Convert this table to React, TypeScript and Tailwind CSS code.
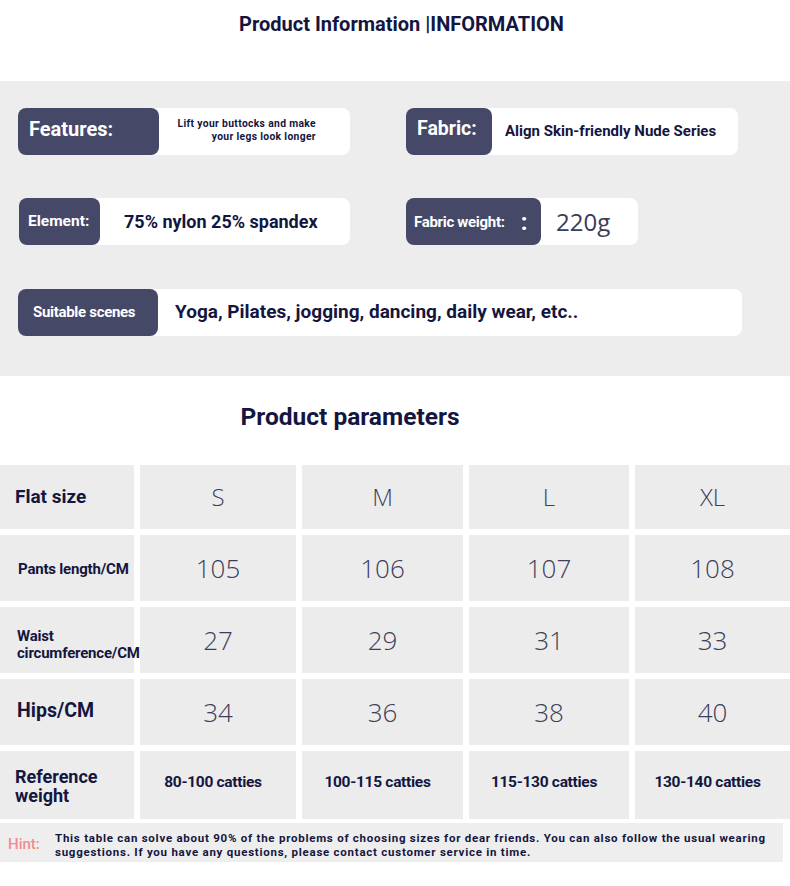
import React from 'react';

const navy = 'text-[#14163f]';

function Card({
  label,
  labelW,
  width,
  labelClass,
  children,
}: {
  label: React.ReactNode;
  labelW: string;
  width: string;
  labelClass: string;
  children: React.ReactNode;
}) {
  return (
    <div className={`flex h-[47px] rounded-[8px] bg-white ${width}`}>
      <div
        className={`flex h-full shrink-0 items-center rounded-[8px] bg-[#464868] text-white font-bold ${labelW} ${labelClass}`}
      >
        {label}
      </div>
      <div className="flex flex-1 items-center">{children}</div>
    </div>
  );
}

const sizes = ['S', 'M', 'L', 'XL'];
const rows = [
  {
    label: <>Pants length/CM</>,
    cls: 'text-[15px] pl-[18px] pt-[2px] whitespace-nowrap tracking-[-0.2px]',
    values: ['105', '106', '107', '108'],
  },
  {
    label: (
      <>
        Waist
        <br />
        circumference/CM
      </>
    ),
    cls: 'text-[15px] pl-[17px] pt-[9px] leading-[17px] whitespace-nowrap tracking-[-0.2px]',
    values: ['27', '29', '31', '33'],
  },
  { label: <>Hips/CM</>, cls: 'text-[19.5px] pl-[17px] pb-[2px]', values: ['34', '36', '38', '40'] },
];
const weights = ['80-100 catties', '100-115 catties', '115-130 catties', '130-140 catties'];

export default function App() {
  return (
    <div className="w-[790px] h-[886px] bg-white font-['Roboto',sans-serif]">
      {/* title */}
      <div className="flex h-[81px] items-start justify-center pt-[9px] pl-[13px]">
        <h1 className={`text-[20px] font-bold ${navy}`}>Product Information |INFORMATION</h1>
      </div>

      {/* info cards */}
      <div className="bg-[#ededed] pt-[27px] pb-[40px] h-[295px]">
        <div className="flex pl-[18px]">
          <Card label="Features:" labelW="w-[141px]" width="w-[332px]" labelClass="pl-[11px] pb-[6px] text-[20px]">
            <div className={`w-[157px] pb-[4px] text-right text-[10.3px] font-bold leading-[13px] tracking-[0.35px] ${navy}`}>
              <div>Lift your buttocks and make</div>
              <div>your legs look longer</div>
            </div>
          </Card>
          <div className="ml-[56px]">
            <Card label="Fabric:" labelW="w-[86px]" width="w-[332px]" labelClass="pl-[11px] pb-[6px] text-[19.5px]">
              <span className={`pl-[13px] text-[15px] font-bold ${navy}`}>Align Skin-friendly Nude Series</span>
            </Card>
          </div>
        </div>

        <div className="flex pl-[19px] mt-[43px]">
          <Card label="Element:" labelW="w-[81px]" width="w-[331px]" labelClass="pl-[9px] text-[15.5px]">
            <span className={`pl-[24px] text-[18px] font-bold ${navy}`}>75% nylon 25% spandex</span>
          </Card>
          <div className="ml-[56px]">
            <Card
              label={
                <>
                  <span className="pt-[1px]">Fabric weight:</span>
                  <span className="ml-[16px] text-[24px] leading-none">:</span>
                </>
              }
              labelW="w-[135px]"
              width="w-[232px]"
              labelClass="pl-[8px] text-[15px] tracking-[-0.3px]"
            >
              <span className="pl-[15px] text-[24px] text-[#3a3c58] font-['Open_Sans',sans-serif]">220g</span>
            </Card>
          </div>
        </div>

        <div className="flex pl-[18px] mt-[44px]">
          <Card label="Suitable scenes" labelW="w-[140px]" width="w-[724px]" labelClass="pl-[15px] text-[15px] tracking-[-0.3px]">
            <span className={`pl-[17px] text-[19px] font-bold ${navy}`}>
              Yoga, Pilates, jogging, dancing, daily wear, etc..
            </span>
          </Card>
        </div>
      </div>

      {/* parameters title */}
      <div className="flex h-[89px] items-center justify-center pb-[6px] pr-[90px]">
        <h2 className={`text-[24.5px] font-bold ${navy}`}>Product parameters</h2>
      </div>

      {/* size table */}
      <div className="grid grid-cols-[134px_156px_161px_160px_1fr] grid-rows-[64px_66px_66px_66px_68px] gap-x-[6px] gap-y-[6px]">
        <div className={`flex items-center bg-[#ececec] pl-[15px] text-[19px] font-bold ${navy}`}>Flat size</div>
        {sizes.map((s) => (
          <div
            key={s}
            className="flex items-center justify-center bg-[#ececec] text-[24px] font-light font-['Open_Sans',sans-serif] text-[#3c3e5a]"
          >
            {s}
          </div>
        ))}

        {rows.map((r, ri) => (
          <React.Fragment key={ri}>
            <div className={`relative z-10 flex items-center bg-[#ececec] font-bold ${navy} ${r.cls}`}>{r.label}</div>
            {r.values.map((v, i) => (
              <div
                key={i}
                className="flex items-center justify-center bg-[#ececec] text-[26px] font-light font-['Open_Sans',sans-serif] text-[#3c3e5a]"
              >
                {v}
              </div>
            ))}
          </React.Fragment>
        ))}

        <div className={`flex items-center bg-[#ececec] pl-[15px] pt-[2px] text-[18px] font-bold leading-[19px] ${navy}`}>
          Reference
          <br />
          weight
        </div>
        {weights.map((w) => (
          <div
            key={w}
            className={`flex items-center justify-center bg-[#ececec] pb-[4px] pr-[10px] text-[15.5px] font-bold tracking-[-0.3px] ${navy}`}
          >
            {w}
          </div>
        ))}
      </div>

      {/* hint */}
      <div className="mt-[4px] flex h-[39px] w-[783px] items-center bg-[#eeeeee] pt-[4px]">
        <span className="w-[55px] shrink-0 pl-[8px] text-[15px] font-medium text-[#f28b8f]">Hint:</span>
        <p className={`whitespace-nowrap text-[11.5px] font-bold leading-[14px] tracking-[0.75px] ${navy}`}>
          This table can solve about 90% of the problems of choosing sizes for dear friends. You can also follow the usual
          wearing
          <br />
          suggestions. If you have any questions, please contact customer service in time.
        </p>
      </div>
    </div>
  );
}
